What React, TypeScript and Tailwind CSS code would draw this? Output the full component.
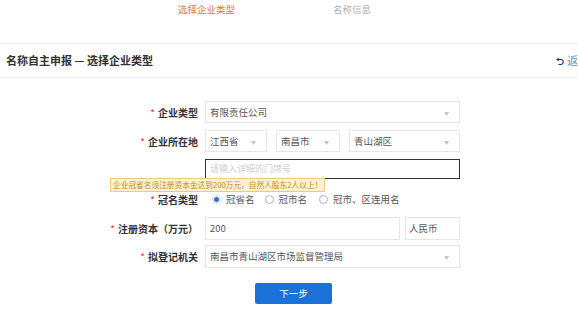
import React from 'react'

function Caret() {
  return <span className="text-[5px] text-[#c4c4c4] leading-none">▼</span>
}

function Label({ children }: { children: React.ReactNode }) {
  return (
    <div className="w-[199px] shrink-0 text-right text-[10px] font-bold text-[#333] pr-[1px]">
      <span className="text-[#e33] font-normal mr-[3px]">*</span>
      {children}
    </div>
  )
}

function Select({ value, className }: { value: string; className: string }) {
  return (
    <div className={`flex items-center justify-between border border-[#e6e6e6] bg-white pl-[4px] pr-[10px] text-[9.5px] text-[#555] ${className}`}>
      <span>{value}</span>
      <Caret />
    </div>
  )
}

export default function App() {
  return (
    <div
      className="relative w-[578px] h-[319px] overflow-hidden bg-white"
      style={{ fontFamily: '"Noto Sans CJK SC", "Noto Sans", sans-serif' }}
    >
      {/* 步骤条 */}
      <div className="flex h-[18px] items-center text-[9.5px]">
        <span className="ml-[178px] text-[#e0782a]">选择企业类型</span>
        <span className="ml-[98px] text-[#b0b0b0]">名称信息</span>
      </div>

      {/* 标题栏 */}
      <div className="mt-[25px] flex h-[35px] items-center justify-between border-y-[1.5px] border-[#eeeeee] pl-[6px] pr-0">
        <span className="text-[11px] font-bold text-[#333]">名称自主申报 — 选择企业类型</span>
        <span className="flex items-center gap-[3px] text-[11px] text-[#5b8fd0] whitespace-nowrap">
          <span className="text-[10px] font-bold text-[#1e3a66]">⮌</span>返
        </span>
      </div>

      {/* 表单 */}
      <div className="mt-[23px] flex flex-col">
        <div className="flex h-[22px] items-center">
          <Label>企业类型</Label>
          <Select value="有限责任公司" className="ml-[6px] h-[22px] w-[255px]" />
        </div>

        <div className="mt-[7px] flex h-[22px] items-center">
          <Label>企业所在地</Label>
          <div className="ml-[6px] flex gap-[9px]">
            <Select value="江西省" className="h-[22px] w-[62px]" />
            <Select value="南昌市" className="h-[22px] w-[64px]" />
            <Select value="青山湖区" className="h-[22px] w-[111px]" />
          </div>
        </div>

        <div className="relative mt-[7px] flex h-[20px] items-center">
          <div className="w-[199px] shrink-0" />
          <div className="ml-[6px] flex h-[20px] w-[255px] items-center border border-[#333] pl-[4px] text-[9px] text-[#cfcfcf]">
            请输入详细的门牌号
          </div>
          <div className="absolute left-[110px] top-[19px] border border-[#ebcb7a] bg-[#fcf1cf] px-[2px] text-[7.7px] leading-[12px] text-[#c98a1e] whitespace-nowrap">
            企业冠省名须注册资本金达到200万元，自然人股东2人以上！
          </div>
        </div>

        <div className="mt-[10px] flex h-[20px] items-center">
          <Label>冠名类型</Label>
          <div className="ml-[13px] flex items-center text-[9.5px] text-[#555]">
            <span className="flex items-center">
              <span className="flex h-[9px] w-[9px] items-center justify-center rounded-full border border-[#cfd8e6]">
                <span className="h-[5px] w-[5px] rounded-full bg-[#2f6fc8]" />
              </span>
              <span className="ml-[5px]">冠省名</span>
            </span>
            <span className="ml-[10px] flex items-center">
              <span className="h-[9px] w-[9px] rounded-full border border-[#aab4c2]" />
              <span className="ml-[5px]">冠市名</span>
            </span>
            <span className="ml-[12px] flex items-center">
              <span className="h-[9px] w-[9px] rounded-full border border-[#aab4c2]" />
              <span className="ml-[5px]">冠市、区连用名</span>
            </span>
          </div>
        </div>

        <div className="mt-[8px] flex h-[23px] items-center">
          <Label>注册资本（万元）</Label>
          <div className="ml-[6px] flex gap-[5px]">
            <div className="flex h-[23px] w-[195px] items-center border border-[#e6e6e6] pl-[4px] text-[9.5px] text-[#555]">200</div>
            <div className="flex h-[23px] w-[55px] items-center border border-[#e6e6e6] pl-[3px] text-[9.5px] text-[#555]">人民币</div>
          </div>
        </div>

        <div className="mt-[5px] flex h-[23px] items-center">
          <Label>拟登记机关</Label>
          <Select value="南昌市青山湖区市场监督管理局" className="ml-[6px] h-[23px] w-[255px]" />
        </div>

        <div className="mt-[15px] flex pl-[255px]">
          <button className="h-[21px] w-[77px] rounded-[2px] bg-[#1a72d8] text-[9.5px] text-white">下一步</button>
        </div>
      </div>
    </div>
  )
}
